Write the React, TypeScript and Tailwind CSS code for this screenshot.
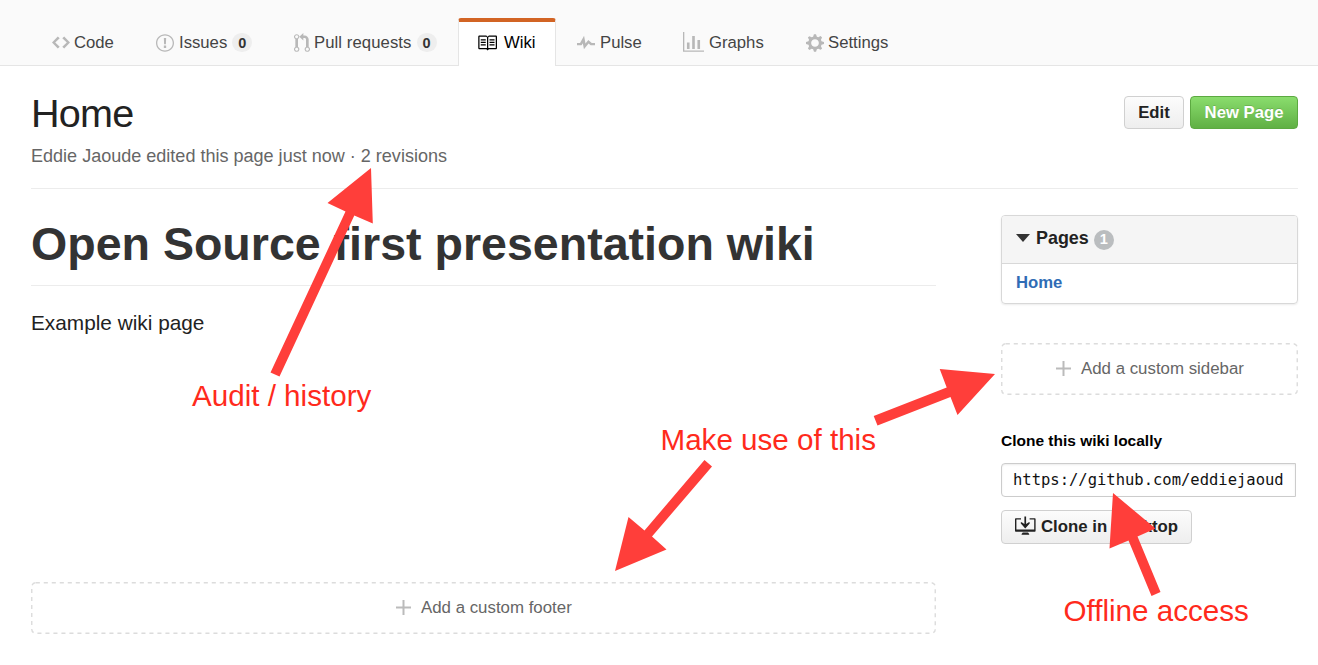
import type { ReactNode } from "react";

const GRAY_ICON = "shrink-0 fill-[#b8b8b8]";

function Icon({ box, d, className }: { box: string; d: string; className: string }) {
  return (
    <svg viewBox={box} preserveAspectRatio="none" className={className} aria-hidden="true">
      <path fillRule="evenodd" d={d} />
    </svg>
  );
}

const paths = {
  code: "M9.5 3L8 4.5 11.5 8 8 11.5 9.5 13 14 8 9.5 3zm-5 0L0 8l4.500 5L6 11.5 2.5 8 6 4.5 4.500 3z",
  issue:
    "M7 2c3.3 0 6 2.7 6 6s-2.7 6-6 6-6-2.7-6-6 2.7-6 6-6zM7 1C3.14 1 0 4.14 0 8s3.14 7 7 7 7-3.14 7-7-3.14-7-7-7zm.9 3H6.1l.2 5h1.4l.2-5zm0 6H6.1v2h1.8v-2z",
  pull: "M11 11.28V5c-.03-.78-.34-1.47-.94-2.06C9.46 2.35 8.78 2.03 8 2H7V0L4 3l3 3V4h1c.27.02.48.11.69.31.21.2.3.42.31.69v6.28A1.993 1.993 0 0 0 10 15a1.993 1.993 0 0 0 1-3.72zm-1 2.92c-.66 0-1.2-.55-1.2-1.2 0-.65.55-1.2 1.2-1.2.65 0 1.2.55 1.2 1.2 0 .65-.55 1.2-1.2 1.2zM4 3c0-1.11-.89-2-2-2a1.993 1.993 0 0 0-1 3.72v6.56A1.993 1.993 0 0 0 2 15a1.993 1.993 0 0 0 1-3.72V4.72c.59-.34 1-.98 1-1.72zm-.8 10c0 .66-.55 1.2-1.2 1.2-.65 0-1.2-.55-1.2-1.2 0-.65.55-1.2 1.2-1.2.65 0 1.2.55 1.2 1.2zM2 4.2C1.34 4.2.8 3.65.8 3c0-.65.55-1.2 1.2-1.2.65 0 1.2.55 1.2 1.2 0 .65-.55 1.2-1.2 1.2z",
  book: "M3 5h4v1H3V5zm0 3h4V7H3v1zm0 2h4V9H3v1zm11-5h-4v1h4V5zm0 2h-4v1h4V7zm0 2h-4v1h4V9zm2-6v9c0 .55-.45 1-1 1H9.5l-1 1-1-1H2c-.55 0-1-.45-1-1V3c0-.55.45-1 1-1h5.5l1 1 1-1H15c.55 0 1 .45 1 1zm-8 .5L7.5 3H2v9h6V3.5zm7-.5H9.5l-.5.5V12h6V3z",
  pulse: "M11.5 8L8.800 5.400 6.600 8.500 5.500 1.600 2.380 8H0v2h3.600l.9-1.800.9 5.400L9 8.500l1.600 1.500H14V8h-2.500z",
  graph: "M16 14v1H0V0h1v14h15zM5 13H3V8h2v5zm4 0H7V3h2v10zm4 0h-2V6h2v7z",
  gear: "M14 8.77v-1.6l-1.94-.64-.45-1.09.88-1.84-1.13-1.13-1.81.91-1.09-.45-.69-1.92h-1.6l-.63 1.94-1.11.45-1.84-.88-1.13 1.13.91 1.81-.45 1.09L0 7.23v1.59l1.94.64.45 1.09-.88 1.84 1.13 1.13 1.81-.91 1.09.45.69 1.92h1.59l.63-1.94 1.11-.45 1.84.88 1.13-1.13-.92-1.81.47-1.09L14 8.75v.02zM7 11c-1.66 0-3-1.34-3-3s1.34-3 3-3 3 1.34 3 3-1.34 3-3 3z",
  plus: "M6.5 0h2v6.500H15v2H8.500V15h-2V8.500H0v-2h6.500z",
  arrowDown: "M9.400 0.400h1.700v7.600l2.700-1.700h0.900v1.300L10.250 12.400 5.800 7.600V6.300h0.900l2.700 1.700z",
  monitor: "M0 3q0-.8.8-.8H6v1.400H1.400V13.600h17.800V3.600H14.600V2.200h5.200q.8 0 .8.800V15q0 .8-.8.800H.8q-.8 0-.8-.8zM7.800 16.600h5.200l1.200 1.400v.7H6.600V18z",
};

function Tab({ icon, label, children, className }: { icon: ReactNode; label: string; children?: ReactNode; className: string }) {
  return (
    <a className={`flex shrink-0 items-center whitespace-nowrap ${className}`}>
      {icon}
      <span>{label}</span>
      {children}
    </a>
  );
}

function Counter({ className }: { className: string }) {
  return (
    <span
      className={`flex h-[19px] w-5 items-center justify-center rounded-full bg-[#eeeeee] pt-px text-[14.5px] font-bold leading-none text-[#333] ${className}`}
    >
      0
    </span>
  );
}

function AddBox({ label, className }: { label: string; className: string }) {
  return (
    <div className={`flex h-[52px] items-center text-[16.85px] text-[#666] ${className}`}>
      <Icon box="0 0 15 15" d={paths.plus} className="mb-px mr-[10px] size-[15px] shrink-0 fill-[#bbb]" />
      <span>{label}</span>
    </div>
  );
}

function DashedFrame({ width }: { width: number }) {
  return (
    <svg className="absolute inset-0 h-full w-full" aria-hidden="true">
      <rect
        x="0.75"
        y="0.75"
        width={width - 1.5}
        height="50.5"
        rx="4"
        fill="none"
        stroke="#dcdcdc"
        strokeWidth="1.4"
        strokeDasharray="4.1 3.9"
      />
    </svg>
  );
}

export default function App() {
  return (
    <div className="relative h-[665px] w-[1318px] overflow-hidden bg-white font-['Liberation_Sans',Arial,sans-serif] text-[#333]">
      <nav className="flex h-[66px] border-b border-[#e5e5e5] bg-[#fafafa] pt-[18px] text-[16.7px] text-[#444]">
        <Tab
          className="ml-[52px] w-[104px] pt-[2px]"
          icon={<Icon box="0 0 14 16" d={paths.code} className={`${GRAY_ICON} mr-[4px] h-[19px] w-[18px]`} />}
          label="Code"
        />
        <Tab
          className="w-[138px] pt-[2px]"
          icon={<Icon box="0 0 14 16" d={paths.issue} className={`${GRAY_ICON} mr-[5px] h-[20px] w-[18px]`} />}
          label="Issues"
        >
          <Counter className="ml-[5px]" />
        </Tab>
        <Tab
          className="w-[164px] pt-[2px] tracking-[0.08px]"
          icon={<Icon box="0 0 12 16" d={paths.pull} className={`${GRAY_ICON} mr-[4px] h-[20px] w-[16px]`} />}
          label="Pull requests"
        >
          <Counter className="ml-[5px]" />
        </Tab>
        <Tab
          className="mb-[-1px] h-[48px] w-[98px] rounded-t-[3px] border-x border-t-4 border-x-[#e5e5e5] border-t-[#d26424] bg-white pb-[2px] pl-[18px] text-black"
          icon={<Icon box="0 0 16 16" d={paths.book} className="mr-[7px] size-[20px] shrink-0 fill-black" />}
          label="Wiki"
        />
        <Tab
          className="ml-[21px] w-[106px] pt-[2px]"
          icon={<Icon box="0 0 14 16" d={paths.pulse} className={`${GRAY_ICON} mr-[5px] h-[18px] w-[18px]`} />}
          label="Pulse"
        />
        <Tab
          className="w-[123px] pt-[2px]"
          icon={<Icon box="0 0 16 16" d={paths.graph} className={`${GRAY_ICON} mr-[5px] size-[21px]`} />}
          label="Graphs"
        />
        <Tab
          className="pt-[2px]"
          icon={<Icon box="0 0 14 16" d={paths.gear} className={`${GRAY_ICON} mr-[4px] h-[20px] w-[18px]`} />}
          label="Settings"
        />
      </nav>

      <div className="pl-[31px] pr-5">
        <header className="flex h-[123px] items-start justify-between border-b border-[#ececec] pt-[24px]">
          <div>
            <h1 className="text-[39.6px] leading-[46px] tracking-[-0.8px] text-[#222]">Home</h1>
            <p className="mt-[9px] whitespace-nowrap text-[18.05px] leading-[22px] text-[#666]">
              Eddie Jaoude edited this page just now · 2 revisions
            </p>
          </div>
          <div className="flex gap-[6px] pt-[6px] text-[16.7px] font-bold">
            <button className="h-[33px] w-[60px] rounded-[4px] border border-[#d0d0d0] bg-linear-to-b from-[#fcfcfc] to-[#eee] text-[#222]">
              Edit
            </button>
            <button className="h-[33px] w-[108px] whitespace-nowrap rounded-[4px] border border-[#5ca941] bg-linear-to-b from-[#8add6d] to-[#60b044] text-white [text-shadow:0_-1px_0_rgba(0,0,0,0.15)]">
              New Page
            </button>
          </div>
        </header>

        <div className="flex justify-between">
          <main className="w-[905px]">
            <h2 className="mt-[25px] h-[72px] whitespace-nowrap border-b border-[#ececec] text-[46.55px] font-bold leading-[60px] text-[#333]">
              Open Source first presentation wiki
            </h2>
            <p className="mt-[25px] text-[20.8px] leading-6 text-[#222]">Example wiki page</p>
            <div className="relative mt-[247px]">
              <DashedFrame width={905} />
              <AddBox label="Add a custom footer" className="pl-[365px]" />
            </div>
          </main>

          <aside className="w-[297px]">
            <section className="mt-[26px] h-[89px] rounded-[4px] border border-[#d8d8d8] font-bold shadow-[0_1px_2px_rgba(0,0,0,0.08)]">
              <h3 className="flex h-[48px] items-center rounded-t-[3px] border-b border-[#d8d8d8] bg-[#f5f5f5] pb-[2px] pl-[14px] text-[17.9px] text-[#222]">
                <Icon box="0 0 14 8" d="M0 0h14L7 8z" className="mb-px mr-[6px] h-[8px] w-[14px] fill-[#333]" />
                Pages
                <span className="ml-[5px] mt-[2px] flex size-5 items-center justify-center rounded-full bg-[#babdbf] text-[14.5px] leading-none text-white">
                  1
                </span>
              </h3>
              <a className="block pl-[14px] text-[16.7px] leading-[38px] text-[#2f6cb5]">Home</a>
            </section>
            <div className="relative mt-[39px]">
              <DashedFrame width={297} />
              <AddBox label="Add a custom sidebar" className="pl-[55px]" />
            </div>
            <p className="mt-[36px] text-[15.5px] font-bold leading-5 text-black">Clone this wiki locally</p>
            <div className="mt-[12px] flex h-[34px] w-[295px] items-center rounded-l-[4px] border border-[#ccc] pl-[11px] pt-[2px] font-['DejaVu_Sans_Mono',monospace] text-[15.5px] text-[#111] shadow-[inset_0_1px_2px_rgba(0,0,0,0.08)]">
              https://github.com/eddiejaoud
            </div>
            <button className="mt-[13px] flex h-[34px] w-[191px] items-center whitespace-nowrap rounded-[4px] border border-[#d0d0d0] bg-linear-to-b from-[#fcfcfc] to-[#eee] pl-[13px] text-[16.8px] font-bold text-[#222]">
              <Icon
                box="0 0 21 19"
                d={`${paths.arrowDown}${paths.monitor}`}
                className="mb-[3px] mr-[5px] h-[19px] w-[21px] shrink-0 fill-[#222]"
              />
              Clone in Desktop
            </button>
          </aside>
        </div>
      </div>

      <svg className="absolute inset-0" width="1318" height="665" viewBox="0 0 1318 665" fill="#ff3e3a" aria-hidden="true">
        <path d="M371 168l1.800 55.500-18.500-8L279.500 376.500l-9-4L345.500 211.500 327.500 203z" />
        <path d="M995 374l-37.500 41-7-18-73 28.500-3.800-9.500 73-28.500-7-18.500z" />
        <path d="M615 571l13.500-54 16 13.500L704.500 460l7.500 6.500L652 536.500 666.500 549.500z" />
        <path d="M1113 493l42.500 35.500-18 8L1160.500 592l-9 4L1128.500 540.500 1109.500 548.500z" />
      </svg>
      <span className="absolute left-[192px] top-[379px] whitespace-nowrap text-[29.6px] leading-[34px] text-[#ff2a1c]">Audit / history</span>
      <span className="absolute left-[660.500px] top-[423px] whitespace-nowrap text-[29.6px] leading-[34px] text-[#ff2a1c]">Make use of this</span>
      <span className="absolute left-[1063.500px] top-[594px] whitespace-nowrap text-[29.6px] leading-[34px] text-[#ff2a1c]">Offline access</span>
    </div>
  );
}
